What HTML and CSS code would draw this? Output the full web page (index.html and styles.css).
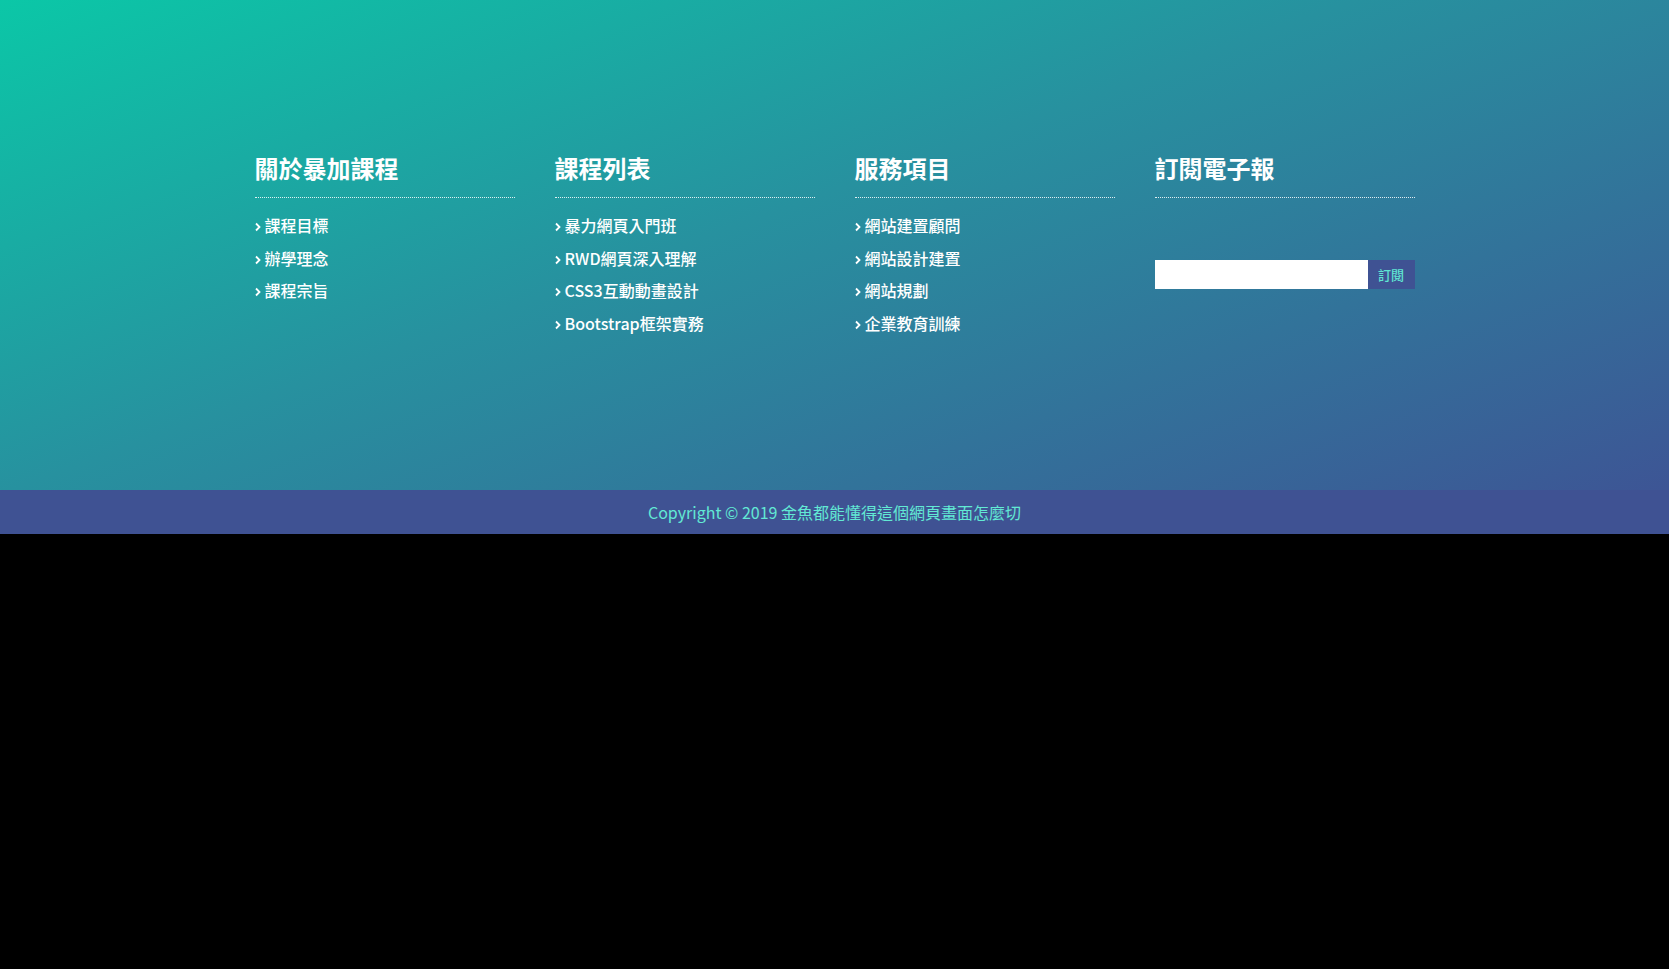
FILE: index.html
```html
<!DOCTYPE html>
<html lang="zh-Hant">
<head>
<meta charset="utf-8">
<title>Footer</title>
<link rel="stylesheet" href="styles.css">
</head>
<body>
<footer class="site-footer">
  <div class="footer-main">
    <div class="container">
      <div class="col">
        <h3 class="col-title">關於暴加課程</h3>
        <ul class="link-list">
          <li><a href="#"><svg class="chev" viewBox="0 0 6 10"><path d="M1 1.5 L4.5 5 L1 8.5" /></svg>課程目標</a></li>
          <li><a href="#"><svg class="chev" viewBox="0 0 6 10"><path d="M1 1.5 L4.5 5 L1 8.5" /></svg>辦學理念</a></li>
          <li><a href="#"><svg class="chev" viewBox="0 0 6 10"><path d="M1 1.5 L4.5 5 L1 8.5" /></svg>課程宗旨</a></li>
        </ul>
      </div>
      <div class="col">
        <h3 class="col-title">課程列表</h3>
        <ul class="link-list">
          <li><a href="#"><svg class="chev" viewBox="0 0 6 10"><path d="M1 1.5 L4.5 5 L1 8.5" /></svg>暴力網頁入門班</a></li>
          <li><a href="#"><svg class="chev" viewBox="0 0 6 10"><path d="M1 1.5 L4.5 5 L1 8.5" /></svg>RWD網頁深入理解</a></li>
          <li><a href="#"><svg class="chev" viewBox="0 0 6 10"><path d="M1 1.5 L4.5 5 L1 8.5" /></svg>CSS3互動動畫設計</a></li>
          <li><a href="#"><svg class="chev" viewBox="0 0 6 10"><path d="M1 1.5 L4.5 5 L1 8.5" /></svg>Bootstrap框架實務</a></li>
        </ul>
      </div>
      <div class="col">
        <h3 class="col-title">服務項目</h3>
        <ul class="link-list">
          <li><a href="#"><svg class="chev" viewBox="0 0 6 10"><path d="M1 1.5 L4.5 5 L1 8.5" /></svg>網站建置顧問</a></li>
          <li><a href="#"><svg class="chev" viewBox="0 0 6 10"><path d="M1 1.5 L4.5 5 L1 8.5" /></svg>網站設計建置</a></li>
          <li><a href="#"><svg class="chev" viewBox="0 0 6 10"><path d="M1 1.5 L4.5 5 L1 8.5" /></svg>網站規劃</a></li>
          <li><a href="#"><svg class="chev" viewBox="0 0 6 10"><path d="M1 1.5 L4.5 5 L1 8.5" /></svg>企業教育訓練</a></li>
        </ul>
      </div>
      <div class="col">
        <h3 class="col-title">訂閱電子報</h3>
        <form class="subscribe">
          <input class="subscribe-input" type="text">
          <button class="subscribe-btn" type="button">訂閱</button>
        </form>
      </div>
    </div>
  </div>
  <div class="copyright">Copyright © 2019 金魚都能懂得這個網頁畫面怎麼切</div>
</footer>
</body>
</html>
```

FILE: styles.css
```css
* { box-sizing: border-box; }

html, body {
  margin: 0;
  padding: 0;
  background: #000;
}

body {
  font-family: "Noto Sans CJK TC", "Noto Sans", sans-serif;
}

.footer-main {
  height: 490px;
  padding-top: 150px;
  background: linear-gradient(160deg, #0bc7a7 0%, #27919f 45%, #3d5595 100%);
}

.container {
  width: 1200px;
  margin: 0 auto;
  display: flex;
}

.col {
  width: 300px;
  padding: 0 20px;
}

.col-title {
  margin: 0;
  font-size: 24px;
  line-height: 36px;
  font-weight: 700;
  color: #fff;
  padding-bottom: 11px;
  border-bottom: 1px dotted rgba(255, 255, 255, 0.85);
}

.link-list {
  list-style: none;
  margin: 11px 0 0;
  padding: 0;
}

.link-list li {
  line-height: 32.5px;
  height: 32.5px;
}

.link-list a {
  color: #fff;
  text-decoration: none;
  font-size: 16px;
  font-weight: 500;
  display: inline-flex;
  align-items: center;
}

.chev {
  width: 6px;
  height: 10px;
  margin: 3px 4px 0 0;
  fill: none;
  stroke: #fff;
  stroke-width: 1.8;
}

.subscribe {
  display: flex;
  margin-top: 62px;
}

.subscribe-input {
  width: 213px;
  height: 29px;
  border: none;
  margin: 0;
  padding: 0 6px;
  background: #fff;
  outline: none;
}

.subscribe-btn {
  width: 47px;
  height: 29px;
  border: none;
  margin: 0;
  padding: 0;
  background: #3f5293;
  color: #5fe6d2;
  font-family: "Noto Sans CJK TC", sans-serif;
  font-size: 13px;
  font-weight: 500;
}

.copyright {
  height: 44px;
  line-height: 44px;
  background: #3f5293;
  color: #62e9d4;
  text-align: center;
  font-size: 16px;
  font-weight: 400;
}
```
